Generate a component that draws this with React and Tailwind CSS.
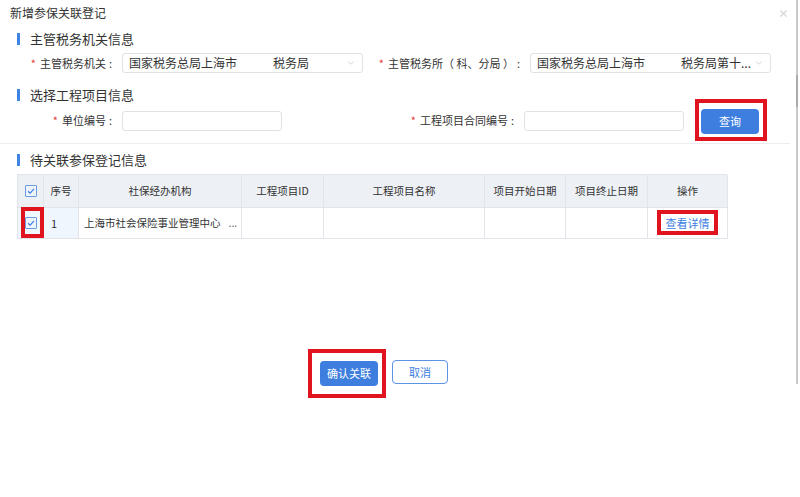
import { ChevronDown, X } from 'lucide-react';

const font = { fontFamily: '"Noto Sans CJK SC", "Noto Sans", sans-serif' };

function SectionTitle({ children }) {
  return (
    <div className="flex items-center pl-[17px] h-[18px]">
      <span className="w-[3px] h-[12px] bg-[#3f84e5]" />
      <span className="ml-[10px] text-[13px] leading-[18px] text-[#333]">{children}</span>
    </div>
  );
}

function Label({ w, children }) {
  return (
    <div style={{ width: w }} className="shrink-0 pr-[6px] text-right text-[11px] text-[#333] whitespace-nowrap">
      <span className="text-[#e23b3b] mr-[4px]">*</span>
      {children}
      <span className="ml-[3px]">:</span>
    </div>
  );
}

function Select({ children }) {
  return (
    <div className="ml-[4px] w-[241px] h-[20px] flex items-center justify-between rounded-[3px] border border-[#dfe2e7] pl-[6px] pr-[6px] text-[12px] text-[#333] whitespace-nowrap">
      <span>{children}</span>
      <ChevronDown size={10} className="text-[#c9ccd2]" />
    </div>
  );
}

function Check() {
  return (
    <span className="inline-flex w-[12px] h-[12px] items-center justify-center border border-[#6b9be4] bg-[#eef4fd] rounded-[1px]">
      <svg width="8" height="8" viewBox="0 0 8 8">
        <path d="M1 4.2 L3.1 6.2 L7 1.8" fill="none" stroke="#3f7fe0" strokeWidth="1.2" />
      </svg>
    </span>
  );
}

const cols = [
  ['', 26],
  ['序号', 35],
  ['社保经办机构', 163],
  ['工程项目ID', 82],
  ['工程项目名称', 161],
  ['项目开始日期', 81],
  ['项目终止日期', 82],
  ['操作', 80],
];

export default function App() {
  return (
    <div style={font} className="relative w-[800px] h-[497px] bg-white overflow-hidden">
      <X size={11} strokeWidth={2.5} className="absolute left-[778px] top-[8px] text-[#d3d5d9]" />
      <div className="absolute left-[796px] top-0 w-[2px] h-[384px] bg-[#c7c9cc]" />
      <div className="absolute left-[796px] top-[75px] w-[2px] h-[32px] bg-[#a9abae]" />

      <div className="pl-[10px] pt-[5px] text-[12px] leading-[16px] text-[#333]">新增参保关联登记</div>

      <div className="mt-[9px]">
        <SectionTitle>主管税务机关信息</SectionTitle>
      </div>

      <div className="mt-[5px] flex items-center h-[20px]">
        <Label w={118}>主管税务机关</Label>
        <Select>国家税务总局上海市　　　税务局</Select>
        <Label w={163}>主管税务所（ 科、分局 ）</Label>
        <Select>国家税务总局上海市　　　税务局第十...</Select>
      </div>

      <div className="mt-[13px]">
        <SectionTitle>选择工程项目信息</SectionTitle>
      </div>

      <div className="mt-[4px] flex items-center h-[25px]">
        <Label w={118}>单位编号</Label>
        <div className="ml-[4px] w-[160px] h-[20px] rounded-[3px] border border-[#dfe2e7]" />
        <Label w={238}>工程项目合同编号</Label>
        <div className="ml-[4px] w-[160px] h-[20px] rounded-[3px] border border-[#dfe2e7]" />
        <div className="relative ml-[17px]">
          <button className="w-[58px] h-[25px] rounded-[4px] bg-[#3d7edf] text-white text-[11px]">查询</button>
          <div className="absolute left-[-6px] top-[-8px] w-[72px] h-[42px] border-[4px] border-[#e0141e]" />
        </div>
      </div>

      <div className="mt-[10px] w-[790px] h-px bg-[#ebedf0]" />

      <div className="mt-[7px]">
        <SectionTitle>待关联参保登记信息</SectionTitle>
      </div>

      <div className="mt-[5px] ml-[17px] w-[710px] border-l border-t border-[#e1e4e9] text-[10.5px] text-[#333]">
        <div className="flex h-[33px] bg-[#edf0f5]">
          {cols.map(([t, w], i) => (
            <div key={i} style={{ width: w }} className="shrink-0 flex items-center justify-center border-r border-b border-[#e1e4e9]">
              {i === 0 ? <Check /> : t}
            </div>
          ))}
        </div>
        <div className="flex h-[31px]">
          <div style={{ width: 26 }} className="relative shrink-0 flex items-center justify-center border-r border-b border-[#e1e4e9] bg-[#f0f6fe]">
            <Check />
            <div className="absolute left-[3px] top-[-1px] w-[23px] h-[31px] border-[4px] border-[#e0141e]" />
          </div>
          <div style={{ width: 35 }} className="shrink-0 flex items-center pl-[7px] border-r border-b border-[#e1e4e9] bg-[#f0f6fe] text-[11px]">1</div>
          <div style={{ width: 163 }} className="shrink-0 flex items-center pl-[5px] border-r border-b border-[#e1e4e9] whitespace-nowrap">
            上海市社会保险事业管理中心<span className="ml-[8px] text-[#666]">...</span>
          </div>
          <div style={{ width: 82 }} className="shrink-0 border-r border-b border-[#e1e4e9]" />
          <div style={{ width: 161 }} className="shrink-0 border-r border-b border-[#e1e4e9]" />
          <div style={{ width: 81 }} className="shrink-0 border-r border-b border-[#e1e4e9]" />
          <div style={{ width: 82 }} className="shrink-0 border-r border-b border-[#e1e4e9]" />
          <div style={{ width: 80 }} className="relative shrink-0 flex items-center justify-center border-r border-b border-[#e1e4e9] text-[#3d7edf] text-[11px]">
            查看详情
            <div className="absolute left-[9px] top-[2px] w-[61px] h-[25px] border-[4px] border-[#e0141e]" />
          </div>
        </div>
      </div>

      <div className="mt-[120px] ml-[320px] flex items-center gap-[14px]">
        <div className="relative">
          <button className="w-[58px] h-[25px] rounded-[4px] bg-[#3d7edf] text-white text-[11px]">确认关联</button>
          <div className="absolute left-[-12px] top-[-10px] w-[78px] h-[49px] border-[4px] border-[#e0141e]" />
        </div>
        <button className="w-[56px] h-[24px] rounded-[4px] border border-[#5c93e4] bg-white text-[#3d7edf] text-[11px]">取消</button>
      </div>
    </div>
  );
}
